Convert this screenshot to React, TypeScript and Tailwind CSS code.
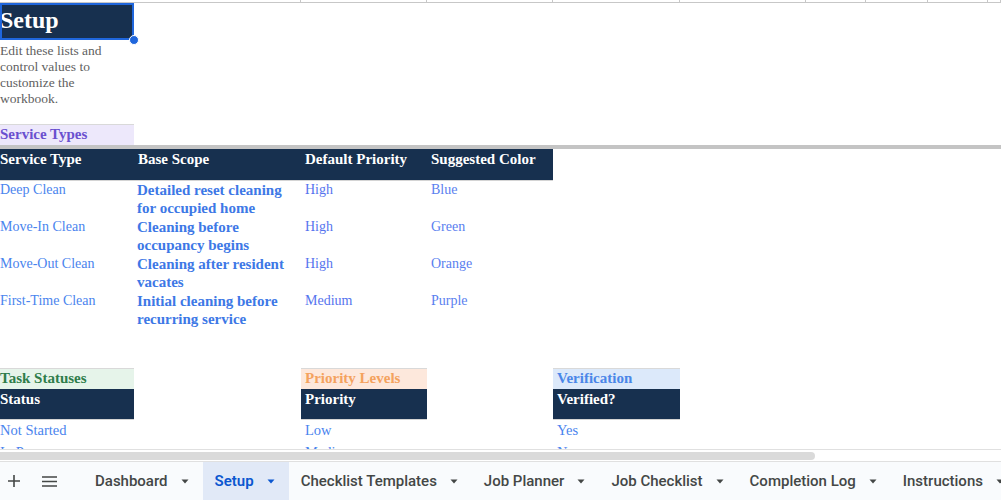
import React from 'react'

// column widths of the visible grid (A..J)
const COLS = [134, 167, 126, 126, 127, 126, 60, 62, 60, 13]

const NAVY = 'bg-[#17304f]'

type Service = { type: string; scope: string; priority: string; color: string }

const services: Service[] = [
  { type: 'Deep Clean', scope: 'Detailed reset cleaning for occupied home', priority: 'High', color: 'Blue' },
  { type: 'Move-In Clean', scope: 'Cleaning before occupancy begins', priority: 'High', color: 'Green' },
  { type: 'Move-Out Clean', scope: 'Cleaning after resident vacates', priority: 'High', color: 'Orange' },
  { type: 'First-Time Clean', scope: 'Initial cleaning before recurring service', priority: 'Medium', color: 'Purple' },
]

const tabs = ['Dashboard', 'Setup', 'Checklist Templates', 'Job Planner', 'Job Checklist', 'Completion Log', 'Instructions']

const Caret = ({ active }: { active?: boolean }) => (
  <svg width="8" height="5" viewBox="0 0 8 5" className="shrink-0">
    <path d="M0.5 0.5h7L4 4.5z" fill={active ? '#0b57d0' : '#444746'} />
  </svg>
)

const Cell = ({
  w,
  className = '',
  children,
}: {
  w: number
  className?: string
  children?: React.ReactNode
}) => (
  <div className={`shrink-0 ${className}`} style={{ width: w }}>
    {children}
  </div>
)

export default function App() {
  return (
    <div className="w-[1001px] h-[500px] flex flex-col bg-white overflow-hidden font-['Liberation_Serif',serif]">
      {/* sheet grid */}
      <div className="h-[449px] shrink-0 overflow-hidden flex flex-col">
        {/* top edge of the grid */}
        <div className="flex h-[3px] shrink-0 border-b border-[#c7c7c7]">
          <Cell w={COLS[0]} />
          {COLS.slice(1).map((w, i) => (
            <Cell key={i} w={w} className="border-r border-[#c7c7c7]" />
          ))}
        </div>

        {/* row 1: title */}
        <div className="flex h-[37px] shrink-0">
          <Cell w={COLS[0]} className={`relative ${NAVY}`}>
            <div className="text-[24px] font-bold text-white leading-[35px]">Setup</div>
            <div className="absolute inset-0 border-2 border-[#1f66dc]" />
            <div className="absolute -right-[5px] -bottom-[5px] w-[10px] h-[10px] rounded-full bg-[#1f66dc] border border-white" />
          </Cell>
        </div>

        {/* row 2: description */}
        <div className="flex h-[84px] shrink-0">
          <Cell w={COLS[0]} className="pt-[3px] text-[13.5px] leading-[16px] text-[#5f5f5f]">
            Edit these lists and
            <br />
            control values to
            <br />
            customize the
            <br />
            workbook.
          </Cell>
        </div>

        {/* row 3: section label */}
        <div className="flex h-[21px] shrink-0">
          <Cell
            w={COLS[0]}
            className="bg-[#ede8fb] border-t border-[#d9d9d9] text-[15px] font-bold text-[#6a50cf] leading-[19px]"
          >
            Service Types
          </Cell>
        </div>

        {/* frozen divider */}
        <div className="h-[4px] bg-[#c4c4c4] shrink-0" />

        {/* service table header */}
        <div className="flex h-[32px] shrink-0">
          {['Service Type', 'Base Scope', 'Default Priority', 'Suggested Color'].map((h, i) => (
            <Cell
              key={h}
              w={COLS[i]}
              className={`${NAVY} border-b border-[#d4d4d4] text-[15px] font-bold text-white leading-[18px] pt-[1px] ${i === 0 ? '' : 'pl-[4px]'}`}
            >
              {h}
            </Cell>
          ))}
        </div>

        {/* service rows */}
        {services.map((s) => (
          <div key={s.type} className="flex h-[37px] shrink-0 text-[14px] leading-[18px]">
            <Cell w={COLS[0]} className="text-[#4a84ee]">
              {s.type}
            </Cell>
            <Cell w={COLS[1]} className="pl-[3px] pr-[2px] text-[15px] font-bold text-[#3d78e6]">
              {s.scope}
            </Cell>
            <Cell w={COLS[2]} className="pl-[4px] text-[#5674ee]">
              {s.priority}
            </Cell>
            <Cell w={COLS[3]} className="pl-[4px] text-[#5a80ef]">
              {s.color}
            </Cell>
          </div>
        ))}

        <div className="h-[39px] shrink-0" />

        {/* second block section labels */}
        <div className="flex h-[21px] shrink-0 text-[15px] font-bold leading-[19px]">
          <Cell w={COLS[0]} className="bg-[#e6f4ea] border-t border-[#d9d9d9] text-[#2f7d4a]">
            Task Statuses
          </Cell>
          <Cell w={COLS[1]} />
          <Cell w={COLS[2]} className="bg-[#fde8dc] border-t border-[#d9d9d9] pl-[4px] text-[#f4a25e]">
            Priority Levels
          </Cell>
          <Cell w={COLS[3]} />
          <Cell w={COLS[4]} className="bg-[#dce9fa] border-t border-[#d9d9d9] pl-[4px] text-[#4a86e8]">
            Verification
          </Cell>
        </div>

        <div className="flex h-[31px] shrink-0 text-[15px] font-bold text-white leading-[18px]">
          <Cell w={COLS[0]} className={`${NAVY} border-b border-[#d4d4d4] pt-[1px]`}>
            Status
          </Cell>
          <Cell w={COLS[1]} />
          <Cell w={COLS[2]} className={`${NAVY} border-b border-[#d4d4d4] pl-[4px] pt-[1px]`}>
            Priority
          </Cell>
          <Cell w={COLS[3]} />
          <Cell w={COLS[4]} className={`${NAVY} border-b border-[#d4d4d4] pl-[4px] pt-[1px]`}>
            Verified?
          </Cell>
        </div>

        {[
          ['Not Started', 'Low', 'Yes'],
          ['In Progress', 'Medium', 'No'],
        ].map(([a, b, c]) => (
          <div key={a} className="flex h-[22px] shrink-0 text-[14.5px] leading-[18px] text-[#4a84ee] pt-[1px]">
            <Cell w={COLS[0]}>{a}</Cell>
            <Cell w={COLS[1]} />
            <Cell w={COLS[2]} className="pl-[4px]">
              {b}
            </Cell>
            <Cell w={COLS[3]} />
            <Cell w={COLS[4]} className="pl-[4px]">
              {c}
            </Cell>
          </div>
        ))}
      </div>

      {/* horizontal scrollbar */}
      <div className="h-[13px] shrink-0 border-t border-b border-[#e0e0e0] bg-white flex items-center">
        <div className="w-[815px] h-[8px] rounded-r-full bg-[#dadada]" />
      </div>

      {/* sheet tabs */}
      <div className="h-[38px] shrink-0 bg-[#f9fbfd] flex items-stretch font-['Roboto',sans-serif] text-[15px] text-[#444746]">
        <div className="w-[20px] shrink-0 flex items-center justify-end">
          <svg width="12" height="12" viewBox="0 0 12 12">
            <path d="M6 0v12M0 6h12" stroke="#444746" strokeWidth="1.6" />
          </svg>
        </div>
        <div className="w-[37px] shrink-0 flex items-center justify-end">
          <svg width="15" height="11" viewBox="0 0 15 11">
            <path d="M0 1h15M0 5.5h15M0 10h15" stroke="#444746" strokeWidth="1.5" />
          </svg>
        </div>
        <div className="w-[26px] shrink-0" />
        {tabs.map((t) => {
          const active = t === 'Setup'
          return (
            <div
              key={t}
              className={`shrink-0 flex items-center gap-[13px] pl-[12px] pr-[14px] ${
                active ? 'bg-[#e1e9f7] text-[#0b57d0] font-semibold' : 'font-medium'
              }`}
            >
              <span className="whitespace-nowrap">{t}</span>
              <Caret active={active} />
            </div>
          )
        })}
      </div>
    </div>
  )
}
